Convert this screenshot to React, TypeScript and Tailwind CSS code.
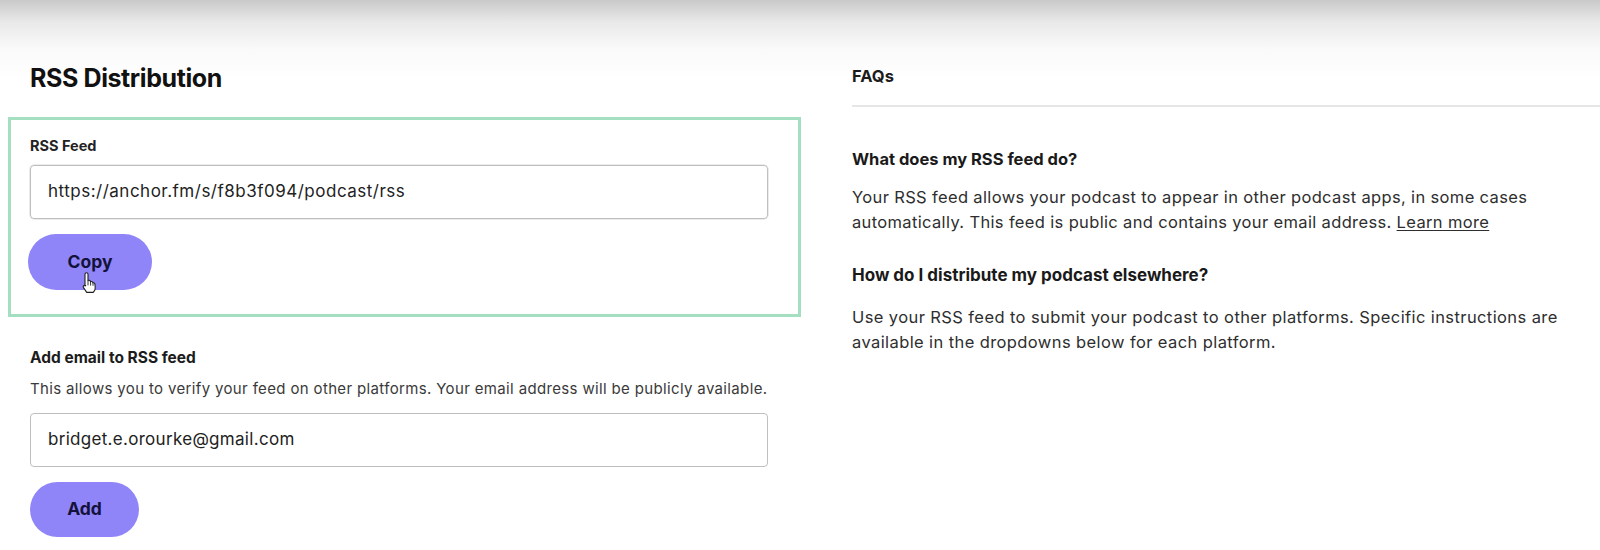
import React from 'react';

const font = { fontFamily: 'Inter, "Liberation Sans", sans-serif' };

const HandCursor: React.FC = () => (
  <svg width="20" height="22" viewBox="0 0 20 22" className="absolute left-[50px] top-[38px]">
    <path
      d="M5 2.2c0-.9.7-1.5 1.5-1.5S8 1.3 8 2.2v6.3l.6-.2c.8-.2 1.5.2 1.7.9l.2.5.5-.2c.8-.2 1.6.2 1.8 1l.1.3.4-.1c.8-.1 1.5.4 1.6 1.2l.3 3.6c.1 1.4-.3 2.8-1.2 3.9l-.8 1H6.7l-3.2-4.8c-.5-.8-.3-1.7.4-2.2.6-.4 1.3-.3 1.8.2L5 14V2.2z"
      fill="#ffffff"
      stroke="#1f1f1f"
      strokeWidth="1.1"
      strokeLinejoin="round"
    />
    <path d="M8 9v4M10.6 10v3.2M13 11v2.4" stroke="#1f1f1f" strokeWidth="0.9" strokeLinecap="round" />
  </svg>
);

const App: React.FC = () => {
  return (
    <div
      className="w-[1600px] h-[550px] overflow-hidden bg-[linear-gradient(to_bottom,#c9c9c9_0px,#e9e9e9_22px,#fafafa_50px,#ffffff_80px)] text-[#1a1a1a]"
      style={font}
    >
      <div className="flex pt-[62px]">
        {/* Left column */}
        <div className="ml-[30px] w-[738px]">
          <h1 className="text-[25px] font-bold leading-[32px] tracking-[-0.4px] text-[#111]">RSS Distribution</h1>

          {/* Highlighted feed box */}
          <div className="mt-[23px] -ml-[22px] w-[793px] h-[200px] border-[3px] border-[#a3dfc0] pl-[19px] pt-[16px]">
            <div className="text-[14.5px] font-bold leading-[20px] text-[#222]">RSS Feed</div>
            <div className="mt-[9px] w-[738px] h-[54px] rounded-[4px] border border-[#bfbfbf] shadow-[0_0_0_0.5px_#d8d8d8] flex items-center pl-[17px] text-[17px] tracking-[0.5px] text-[#222]">
              https://anchor.fm/s/f8b3f094/podcast/rss
            </div>
            <div className="relative mt-[15px] w-[124px]">
              <button className="w-[124px] h-[56px] rounded-full bg-[#8f85f8] text-[17.5px] font-bold text-[#14123a] -ml-[2px]">
                Copy
              </button>
              <HandCursor />
            </div>
          </div>

          {/* Add email */}
          <div className="mt-[31px] text-[15.5px] font-bold leading-[20px] text-[#1c1c1c]">Add email to RSS feed</div>
          <div className="mt-[11px] text-[15px] tracking-[0.35px] leading-[20px] text-[#3a3a3a]">
            This allows you to verify your feed on other platforms. Your email address will be publicly available.
          </div>
          <div className="mt-[14px] w-[738px] h-[54px] rounded-[4px] border border-[#bfbfbf] flex items-center pl-[17px] text-[17px] tracking-[0.3px] text-[#222]">
            bridget.e.orourke@gmail.com
          </div>
          <button className="mt-[15px] w-[109px] h-[55px] rounded-full bg-[#8f85f8] text-[17.5px] font-bold text-[#14123a]">
            Add
          </button>
        </div>

        {/* Right column: FAQs */}
        <div className="ml-[84px] flex-1 pt-[3px]">
          <div className="text-[16.5px] font-bold leading-[22px] text-[#1c1c1c]">FAQs</div>
          <div className="mt-[18px] h-[2px] bg-[#e6e6e6]" />
          <div className="mt-[41px] text-[16.5px] font-bold leading-[22px] text-[#1a1a1a]">What does my RSS feed do?</div>
          <p className="mt-[15px] w-[740px] text-[16.5px] tracking-[0.35px] leading-[25px] text-[#2e2e2e]">
            Your RSS feed allows your podcast to appear in other podcast apps, in some cases
            <br />
            automatically. This feed is public and contains your email address.{' '}
            <span className="underline underline-offset-2">Learn more</span>
          </p>
          <div className="mt-[29px] text-[17px] font-bold leading-[22px] text-[#1a1a1a]">
            How do I distribute my podcast elsewhere?
          </div>
          <p className="mt-[19px] w-[740px] text-[16.5px] tracking-[0.4px] leading-[25px] text-[#2e2e2e]">
            Use your RSS feed to submit your podcast to other platforms. Specific instructions are
            <br />
            available in the dropdowns below for each platform.
          </p>
        </div>
      </div>
    </div>
  );
};

export default App;
